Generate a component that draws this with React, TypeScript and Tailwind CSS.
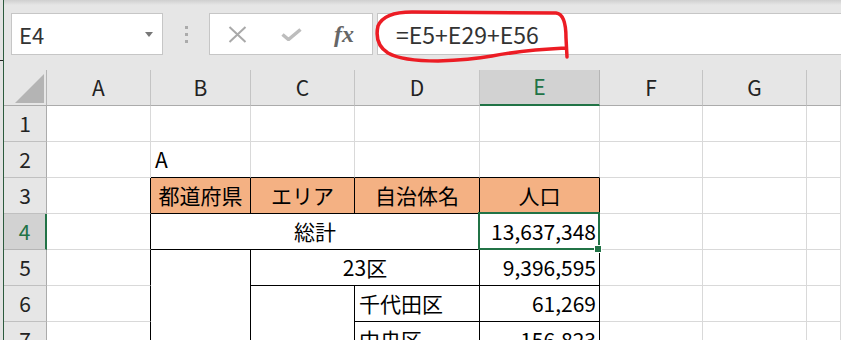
import React from "react";

type Cell = {
  key: string;
  pos: string;
  cls: string;
  text?: string;
  align?: "left" | "center" | "right";
  selected?: boolean;
};

const colStart = ["", "col-start-1", "col-start-2", "col-start-3", "col-start-4", "col-start-5", "col-start-6", "col-start-7", "col-start-8", "col-start-9"];
const rowStart = ["", "row-start-1", "row-start-2", "row-start-3", "row-start-4", "row-start-5", "row-start-6", "row-start-7", "row-start-8"];

const GRID = "border-r border-b border-[#d9d9d9]";

function buildCells(): Cell[] {
  const cells: Cell[] = [];
  const table: Record<string, Cell> = {};
  const add = (r: number, c: number, extra: Partial<Cell> & { span?: string }) => {
    const { span, ...rest } = extra;
    const cell: Cell = {
      key: `${r}-${c}`,
      pos: `${colStart[c]} ${rowStart[r]} ${span ?? ""}`,
      cls: GRID,
      ...rest,
    };
    table[`${r}-${c}`] = cell;
  };
  const orange = "bg-[#f4b183] border-r border-b border-black";
  const blk = "border-r border-b border-black";
  add(4, 3, { cls: orange, text: "都道府県", align: "center" });
  add(4, 4, { cls: orange, text: "エリア", align: "center" });
  add(4, 5, { cls: orange, text: "自治体名", align: "center" });
  add(4, 6, { cls: orange, text: "人口", align: "center" });
  add(5, 3, { cls: blk, text: "総計", align: "center", span: "col-span-3" });
  add(5, 6, { cls: blk, text: "13,637,348", align: "right", selected: true });
  add(6, 3, { cls: blk, span: "row-span-3" });
  add(6, 4, { cls: blk, text: "23区", align: "center", span: "col-span-2" });
  add(6, 6, { cls: blk, text: "9,396,595", align: "right" });
  add(7, 4, { cls: blk, span: "row-span-2" });
  add(7, 5, { cls: blk, text: "千代田区", align: "left" });
  add(7, 6, { cls: blk, text: "61,269", align: "right" });
  add(8, 5, { cls: blk, text: "中央区", align: "left" });
  add(8, 6, { cls: blk, text: "156,823", align: "right" });
  add(3, 3, { cls: "border-r border-[#d9d9d9] border-b border-b-black", text: "A", align: "left" });
  add(3, 4, { cls: "border-r border-[#d9d9d9] border-b border-b-black" });
  add(3, 5, { cls: "border-r border-[#d9d9d9] border-b border-b-black" });
  add(3, 6, { cls: "border-r border-[#d9d9d9] border-b border-b-black" });
  for (let r = 4; r <= 8; r++) {
    add(r, 2, { cls: "border-b border-[#d9d9d9] border-r border-r-black" });
  }
  const covered = new Set<string>(["5-4", "5-5", "7-3", "8-3", "6-5", "8-4"]);
  for (let r = 2; r <= 8; r++) {
    for (let c = 2; c <= 9; c++) {
      const k = `${r}-${c}`;
      if (covered.has(k)) continue;
      if (table[k]) cells.push(table[k]);
      else cells.push({ key: k, pos: `${colStart[c]} ${rowStart[r]}`, cls: GRID });
    }
  }
  return cells;
}

const letters = ["A", "B", "C", "D", "E", "F", "G", ""];

export default function App() {
  const cells = buildCells();
  return (
    <div className="relative w-[841px] h-[340px] overflow-hidden bg-[#e6e6e6] flex font-['Noto_Sans_CJK_JP',sans-serif]">
      <div className="relative w-[3px] h-full bg-[#e3e3e3] shrink-0">
        <div className="absolute left-0 top-[60px] w-[3px] h-px bg-[#222]" />
      </div>
      <div className="w-px h-full bg-[#2c5b3e] shrink-0" />
      <div className="flex-1 flex flex-col min-w-0">
        <div className="h-[70px] shrink-0 flex flex-col">
          <div className="h-[5px] bg-gradient-to-b from-[#cfcfcf] to-[#e6e6e6]" />
          <div className="flex items-start pt-[8px]">
            <div className="ml-[7px] w-[152px] h-[42px] bg-white border border-[#c6c6c6] flex items-center justify-between pl-[7px] pr-[9px]">
              <span className="text-[22px] text-[#333] leading-none">E4</span>
              <svg width="8" height="5" viewBox="0 0 8 5"><path d="M0 0 L8 0 L4 5 Z" fill="#777" /></svg>
            </div>
            <div className="w-[46px] h-[42px] flex flex-col items-center justify-center gap-[4px]">
              <div className="w-[3px] h-[3px] bg-[#ababab]" />
              <div className="w-[3px] h-[3px] bg-[#ababab]" />
              <div className="w-[3px] h-[3px] bg-[#ababab]" />
            </div>
            <div className="w-[164px] h-[42px] bg-white border border-[#c6c6c6] flex items-center">
              <svg className="ml-[18px]" width="19" height="17" viewBox="0 0 19 17">
                <path d="M1.5 1 L17.5 16 M17.5 1 L1.5 16" stroke="#a9a9a9" strokeWidth="2" fill="none" />
              </svg>
              <svg className="ml-[34px]" width="21" height="13" viewBox="0 0 21 13">
                <path d="M1.5 6.5 L7.5 11.5 L19.5 1.5" stroke="#bdbdbd" strokeWidth="3.5" fill="none" strokeLinejoin="miter" />
              </svg>
              <span className="ml-[32px] font-['Liberation_Serif',serif] italic font-bold text-[24px] text-[#666] leading-none">fx</span>
            </div>
            <div className="ml-[4px] flex-1 h-[42px] bg-white border border-[#c6c6c6] border-r-0 flex items-center pl-[18px]">
              <span className="text-[23px] text-[#333] leading-none">=E5+E29+E56</span>
            </div>
          </div>
        </div>
        <div className="grid grid-cols-[43px_104px_100px_104px_125px_120px_103px_104px_1fr] grid-rows-[36px_36px_36px_36px_36px_36px_36px_36px] bg-white text-[21px] text-black">
          <div className="col-start-1 row-start-1 bg-[#e6e6e6] border-r border-b border-r-[#b5b5b5] border-b-[#ababab] relative">
            <svg className="absolute left-[11px] top-[4px]" width="29" height="29" viewBox="0 0 29 29">
              <path d="M29 0 L29 29 L0 29 Z" fill="#b4b4b4" />
            </svg>
          </div>
          {letters.map((l, i) =>
            l === "E" ? (
              <div key={l} className="row-start-1 col-start-6 bg-[#d2d2d2] border-r border-r-[#b5b5b5] border-b-2 border-b-[#217346] flex items-center justify-center text-[#217346]">
                {l}
              </div>
            ) : (
              <div key={"h" + i} className={`row-start-1 ${colStart[i + 2]} bg-[#e6e6e6] border-r border-b border-r-[#c4c4c4] border-b-[#ababab] flex items-center justify-center text-[#222]`}>
                {l}
              </div>
            )
          )}
          {[1, 2, 3, 4, 5, 6, 7].map((n) =>
            n === 4 ? (
              <div key={"r" + n} className="col-start-1 row-start-5 bg-[#d2d2d2] border-b border-b-[#b5b5b5] border-r-2 border-r-[#217346] flex items-center justify-center text-[#217346]">
                {n}
              </div>
            ) : (
              <div key={"r" + n} className={`col-start-1 ${rowStart[n + 1]} bg-[#e6e6e6] border-b border-r border-b-[#c0c0c0] border-r-[#ababab] flex items-center justify-center text-[#222]`}>
                {n}
              </div>
            )
          )}
          {cells.map((c) => (
            <div
              key={c.key}
              className={`${c.pos} ${c.cls} relative flex items-center whitespace-nowrap ${
                c.align === "center" ? "justify-center" : c.align === "right" ? "justify-end pr-[3px]" : "justify-start pl-[4px]"
              } ${c.selected ? "z-10" : ""}`}
            >
              {c.text}
              {c.selected && (
                <>
                  <div className="absolute -left-[2px] -top-[2px] w-[122px] h-[38px] border-2 border-[#217346]" />
                  <div className="absolute left-[114px] top-[31px] w-[8px] h-[8px] bg-[#217346] border border-white" />
                </>
              )}
            </div>
          ))}
        </div>
      </div>
      <svg className="absolute left-0 top-0 pointer-events-none" width="841" height="340" viewBox="0 0 841 340">
        <path
          d="M567 57 L566 38 Q566 14 556 13 L412 12 Q384 12 378 26 Q374 44 388 53 Q402 61 438 61 Q470 60 492 56 Q525 50 565 48"
          stroke="#ec1c24"
          strokeWidth="3.5"
          fill="none"
          strokeLinecap="round"
          strokeLinejoin="round"
        />
      </svg>
    </div>
  );
}
